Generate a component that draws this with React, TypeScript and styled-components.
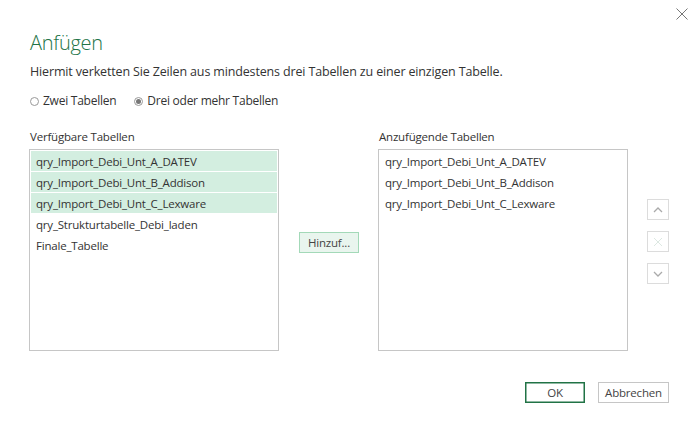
import React from "react";
import styled, { createGlobalStyle } from "styled-components";

const GlobalStyle = createGlobalStyle`
  html, body { margin: 0; padding: 0; background: #fff; }
  body { font-family: "Open Sans", "Noto Sans", sans-serif; color: #444; }
  * { box-sizing: border-box; }
`;

const Dialog = styled.div`
  width: 699px;
  height: 434px;
  background: #fff;
  display: flex;
  flex-direction: column;
  padding: 0 30px 0 30px;
`;

const TopBar = styled.div`
  display: flex;
  justify-content: flex-end;
  height: 26px;
  padding-top: 7px;
  margin-right: -19px;
`;

const CloseButton = styled.button`
  width: 13px;
  height: 13px;
  padding: 0;
  border: none;
  background: transparent;
  display: flex;
  align-items: center;
  justify-content: center;
`;

const Title = styled.h1`
  margin: 3px 0 0 0;
  font-weight: 300;
  font-size: 20px;
  line-height: 28px;
  color: #217346;
  letter-spacing: -0.3px;
`;

const Description = styled.p`
  margin: 6px 0 0 0;
  font-size: 12.5px;
  line-height: 18px;
  color: #333;
  letter-spacing: -0.15px;
`;

const RadioRow = styled.div`
  display: flex;
  gap: 18px;
  margin-top: 12px;
  font-size: 12px;
  line-height: 16px;
  color: #333;
`;

const RadioLabel = styled.label`
  display: flex;
  align-items: center;
  gap: 4px;
  letter-spacing: -0.25px;
`;

const RadioCircle = styled.span<{ $checked?: boolean }>`
  width: 9px;
  height: 9px;
  border-radius: 50%;
  border: 1px solid #999;
  display: flex;
  align-items: center;
  justify-content: center;
  background: #fff;
  &::after {
    content: "";
    width: 5px;
    height: 5px;
    border-radius: 50%;
    background: ${(p) => (p.$checked ? "#777" : "transparent")};
  }
`;

const Columns = styled.div`
  display: flex;
  margin-top: 20px;
  margin-left: -1px;
`;

const ListColumn = styled.div`
  display: flex;
  flex-direction: column;
`;

const ColumnLabel = styled.div`
  font-size: 11.5px;
  line-height: 16px;
  color: #333;
  padding-left: 1px;
  margin-bottom: 4px;
  letter-spacing: -0.2px;
`;

const ListBox = styled.div`
  width: 250px;
  height: 202px;
  border: 1px solid #c6c6c6;
  padding: 1px;
  display: flex;
  flex-direction: column;
  gap: 1px;
`;

const ListItem = styled.div<{ $selected?: boolean }>`
  height: 20px;
  line-height: 21px;
  padding-left: 5px;
  font-size: 11.5px;
  color: #333;
  letter-spacing: -0.2px;
  background: ${(p) => (p.$selected ? "#d3eee0" : "transparent")};
`;

const Middle = styled.div`
  width: 99px;
  display: flex;
  justify-content: center;
  padding-top: 103px;
  padding-left: 1px;
`;

const AddButton = styled.button`
  width: 60px;
  height: 21px;
  border: 1px solid #a3d9b8;
  background: #e9f5ee;
  font-family: inherit;
  font-size: 11.5px;
  color: #444;
  padding: 0;
  letter-spacing: -0.2px;
`;

const SideStack = styled.div`
  display: flex;
  flex-direction: column;
  gap: 11px;
  padding-top: 70px;
  margin-left: 19px;
`;

const SideButton = styled.button`
  width: 22px;
  height: 21px;
  border: 1px solid #dcdcdc;
  background: #fff;
  padding: 0;
  display: flex;
  align-items: center;
  justify-content: center;
`;

const Footer = styled.div`
  display: flex;
  justify-content: flex-end;
  gap: 13px;
  margin-top: 31px;
`;

const FooterButton = styled.button<{ $primary?: boolean; $w: number }>`
  width: ${(p) => p.$w}px;
  height: 21px;
  padding: 0;
  background: #fff;
  border: ${(p) => (p.$primary ? "1px solid #217346" : "1px solid #c6c6c6")};
  box-shadow: ${(p) => (p.$primary ? "inset 0 0 0 0.5px #217346" : "none")};
  font-family: inherit;
  font-size: 11.5px;
  color: #444;
  letter-spacing: -0.2px;
`;

const available = [
  { name: "qry_Import_Debi_Unt_A_DATEV", selected: true },
  { name: "qry_Import_Debi_Unt_B_Addison", selected: true },
  { name: "qry_Import_Debi_Unt_C_Lexware", selected: true },
  { name: "qry_Strukturtabelle_Debi_laden", selected: false },
  { name: "Finale_Tabelle", selected: false },
];

const appended = [
  "qry_Import_Debi_Unt_A_DATEV",
  "qry_Import_Debi_Unt_B_Addison",
  "qry_Import_Debi_Unt_C_Lexware",
];

export default function App() {
  return (
    <>
      <GlobalStyle />
      <Dialog>
        <TopBar>
          <CloseButton aria-label="Schließen">
            <svg width="12" height="12" viewBox="0 0 12 12">
              <path d="M0.5 0.5 L11.5 11.5 M11.5 0.5 L0.5 11.5" stroke="#777" strokeWidth="1" fill="none" />
            </svg>
          </CloseButton>
        </TopBar>
        <Title>Anfügen</Title>
        <Description>
          Hiermit verketten Sie Zeilen aus mindestens drei Tabellen zu einer einzigen Tabelle.
        </Description>
        <RadioRow>
          <RadioLabel>
            <RadioCircle />
            Zwei Tabellen
          </RadioLabel>
          <RadioLabel>
            <RadioCircle $checked />
            Drei oder mehr Tabellen
          </RadioLabel>
        </RadioRow>
        <Columns>
          <ListColumn>
            <ColumnLabel>Verfügbare Tabellen</ColumnLabel>
            <ListBox>
              {available.map((t) => (
                <ListItem key={t.name} $selected={t.selected}>
                  {t.name}
                </ListItem>
              ))}
            </ListBox>
          </ListColumn>
          <Middle>
            <AddButton>Hinzuf...</AddButton>
          </Middle>
          <ListColumn>
            <ColumnLabel>Anzufügende Tabellen</ColumnLabel>
            <ListBox>
              {appended.map((n) => (
                <ListItem key={n}>{n}</ListItem>
              ))}
            </ListBox>
          </ListColumn>
          <SideStack>
            <SideButton aria-label="Nach oben">
              <svg width="10" height="6" viewBox="0 0 10 6">
                <path d="M1 5 L5 1 L9 5" stroke="#aaa" strokeWidth="1.3" fill="none" />
              </svg>
            </SideButton>
            <SideButton aria-label="Entfernen">
              <svg width="10" height="10" viewBox="0 0 10 10">
                <path d="M1 1 L9 9 M9 1 L1 9" stroke="#dde8e2" strokeWidth="1" fill="none" />
              </svg>
            </SideButton>
            <SideButton aria-label="Nach unten">
              <svg width="10" height="6" viewBox="0 0 10 6">
                <path d="M1 1 L5 5 L9 1" stroke="#aaa" strokeWidth="1.3" fill="none" />
              </svg>
            </SideButton>
          </SideStack>
        </Columns>
        <Footer>
          <FooterButton $primary $w={60}>OK</FooterButton>
          <FooterButton $w={71}>Abbrechen</FooterButton>
        </Footer>
      </Dialog>
    </>
  );
}
